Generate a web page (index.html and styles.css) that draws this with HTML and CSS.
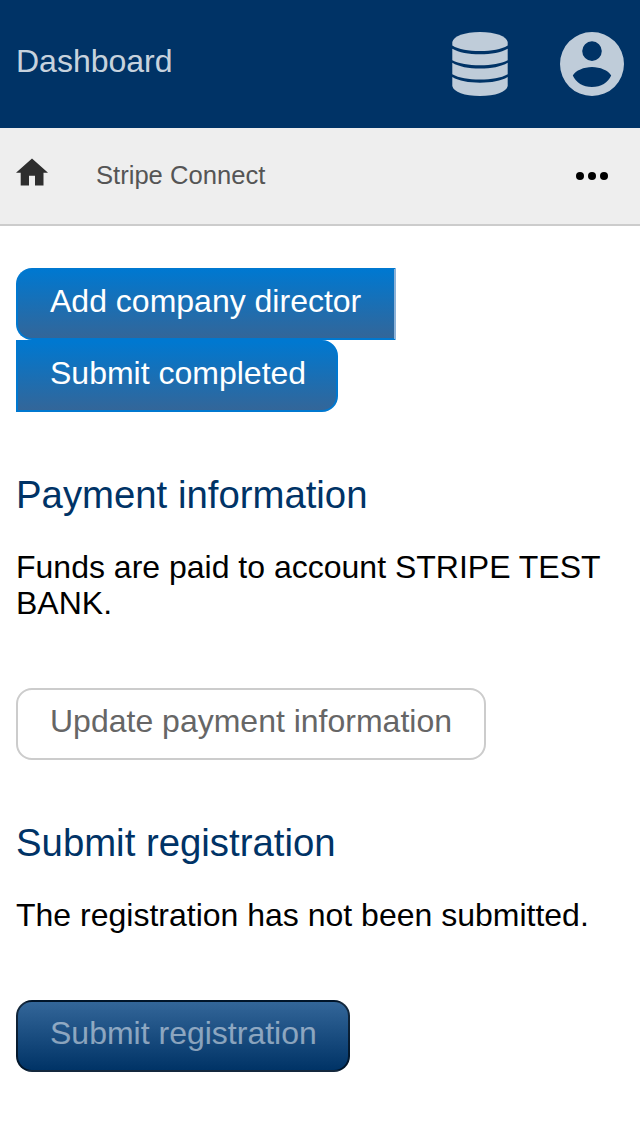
FILE: index.html
```html
<!DOCTYPE html>
<html lang="en">
<head>
<meta charset="utf-8">
<title>Stripe Connect</title>
<link rel="stylesheet" href="styles.css">
</head>
<body>
<header class="header">
  <a class="header-title">Dashboard</a>
  <div class="header-icons">
    <svg class="icon-database" viewBox="0 0 56 64" aria-hidden="true">
      <path d="M0.300 10C1.500 4.300 12.500 0 28 0S54.500 4.300 55.700 10v3.500C49 17.500 40 19 28 19S7 17.500 0.300 13.500Z"/>
      <path d="M0.300 16.700C7 20.500 16.500 22.200 28 22.200s21-1.700 27.700-5.500v11.500C49 31.700 39.500 33.200 28 33.200S7 31.700 0.300 28.200Z"/>
      <path d="M0.300 30.700C7 34.700 16.500 36.500 28 36.500s21-1.800 27.700-5.800v11.600C49 46 39.500 47.600 28 47.600S7 46 0.300 42.300Z"/>
      <path d="M0.300 45C7 49 16.500 50.700 28 50.700S49 49 55.700 45v9C54.500 60 43.500 64 28 64S1.500 60 0.300 54Z"/>
    </svg>
    <svg class="icon-account" viewBox="0 0 64 64" aria-hidden="true">
      <path fill-rule="evenodd" d="M32 0a32 32 0 1 0 0 64a32 32 0 1 0 0-64ZM32 9.300a9.800 9.800 0 1 1 0 19.600a9.800 9.800 0 1 1 0-19.600ZM32 35C40 35 48.500 38.500 51.200 43.500C48 50.500 41 55 32 55S16 50.500 12.800 43.500C15.500 38.500 24 35 32 35Z"/>
    </svg>
  </div>
</header>
<nav class="navbar">
  <svg class="icon-home" viewBox="0 0 32 28" aria-hidden="true"><path d="M16 0.400L32 14.700H27.500V27.600H19V17.800H13V27.600H4.700V14.700H0Z"/></svg>
  <a class="navbar-link">Stripe Connect</a>
  <svg class="icon-more" viewBox="0 0 32 8" aria-hidden="true"><circle cx="4" cy="4" r="4"/><circle cx="16" cy="4" r="4"/><circle cx="28" cy="4" r="4"/></svg>
</nav>
<main class="content">
  <div class="button-group">
    <a class="button button-blue button-first">Add company director</a>
    <a class="button button-blue button-last">Submit completed</a>
  </div>
  <section class="section">
    <h2 class="section-title">Payment information</h2>
    <p class="section-text">Funds are paid to account STRIPE TEST BANK.</p>
    <a class="button button-plain">Update payment information</a>
  </section>
  <section class="section">
    <h2 class="section-title">Submit registration</h2>
    <p class="section-text">The registration has not been submitted.</p>
    <button class="button button-submit" disabled>Submit registration</button>
  </section>
</main>
</body>
</html>
```
FILE: styles.css
```css
* {
  box-sizing: border-box;
}

body {
  margin: 0;
  background: #fff;
  color: #000;
  font-family: "Liberation Sans", Arial, sans-serif;
  font-size: 32px;
  line-height: 36px;
}

.header {
  display: flex;
  justify-content: space-between;
  height: 128px;
  padding: 32px 16px;
  background: #036;
}

.header-title {
  padding-top: 11px;
  color: rgba(255, 255, 255, .8);
}

.header-icons {
  display: flex;
  gap: 52px;
  fill: #bfccd9;
}

.icon-database {
  width: 56px;
  height: 64px;
}

.icon-account {
  width: 64px;
  height: 64px;
}

.navbar {
  display: flex;
  align-items: flex-start;
  height: 98px;
  padding: 30px 32px 0 16px;
  border-bottom: 2px solid #ccc;
  background: #eee;
}

.icon-home {
  width: 32px;
  height: 28px;
  fill: #2e2e2e;
}

.navbar-link {
  margin-left: 48px;
  color: #555;
  font-size: 25.6px;
  line-height: 34px;
}

.icon-more {
  width: 32px;
  height: 8px;
  margin: 14px 0 0 auto;
}

.content {
  padding: 42px 16px 0;
}

.button-group,
.section {
  display: flex;
  flex-direction: column;
  align-items: flex-start;
}

.button {
  height: 72px;
  padding: 13px 32px 19px;
  border: 2px solid;
  border-radius: 16px;
  font: inherit;
  text-align: left;
  white-space: nowrap;
}

.button-blue {
  border-color: #0078d0;
  background: linear-gradient(#0078d0, #369);
  color: #fff;
}

.button-first {
  width: 380px;
  border-right-color: #8cb2d8;
  border-radius: 16px 0 0 16px;
}

.button-last {
  width: 322px;
  border-radius: 0 16px 16px 0;
}

.button-plain {
  border-color: #ccc;
  color: #666;
}

.button-submit {
  width: 334px;
  border-color: rgba(0, 0, 0, .6);
  background: linear-gradient(#369, #036);
  color: rgba(255, 255, 255, .5);
}

.section {
  padding-top: 60px;
}

.section-title {
  margin: 0;
  color: #036;
  font-size: 38.35px;
  font-weight: normal;
  line-height: 46px;
}

.section-text {
  margin: 31px 0 67px;
}
```
